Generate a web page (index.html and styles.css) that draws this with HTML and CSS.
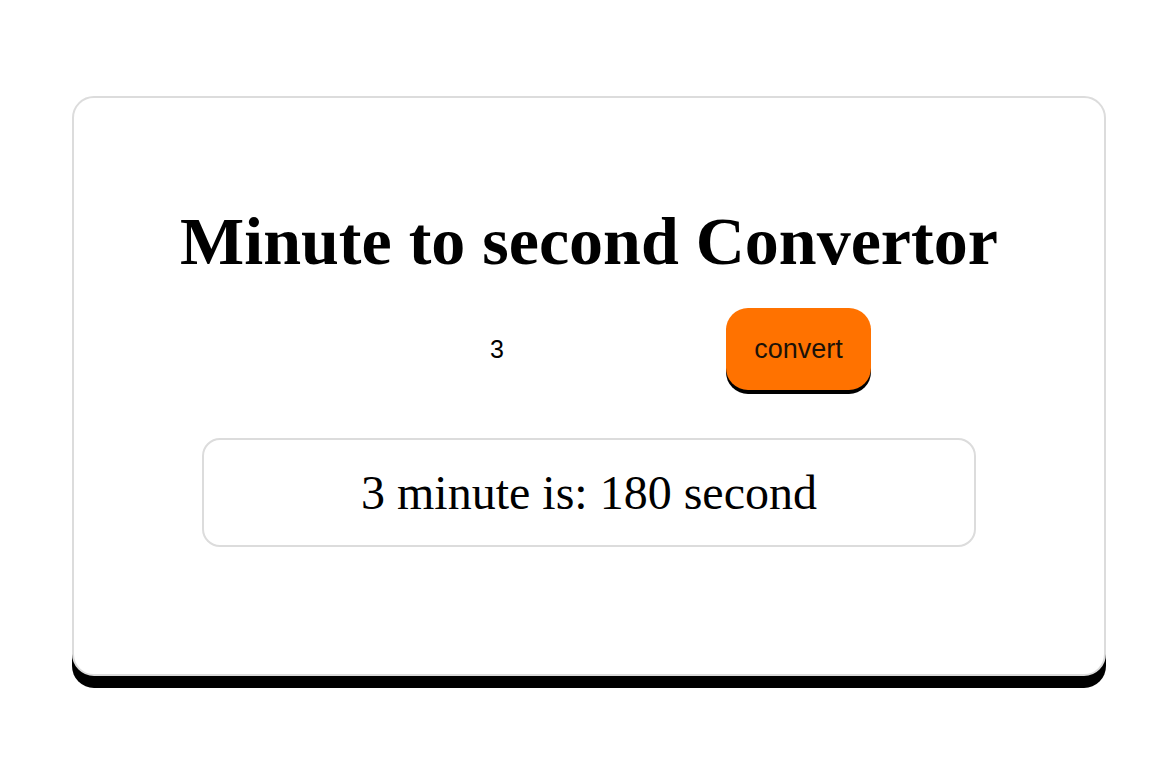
FILE: index.html
```html
<!DOCTYPE html>
<html>
<head>
<meta charset="utf-8">
<title>Minute to second Convertor</title>
<link rel="stylesheet" href="styles.css">
</head>
<body>
<div class="card">
  <h1 class="title">Minute to second Convertor</h1>
  <div class="row">
    <input class="minutes" type="text" value="3">
    <button class="convert">convert</button>
  </div>
  <div class="result">3 minute is: 180 second</div>
</div>
</body>
</html>
```
FILE: styles.css
```css
html, body {
  margin: 0;
  padding: 0;
  background: #ffffff;
}
body {
  box-sizing: border-box;
  min-height: 768px;
  padding: 96px 0 0 72px;
  font-family: "Liberation Serif", "Times New Roman", serif;
}
.card {
  box-sizing: border-box;
  width: 1034px;
  height: 580px;
  border: 2px solid #dcdcdc;
  border-radius: 22px;
  box-shadow: 0 12px 0 #000000;
  background: #ffffff;
  display: flex;
  flex-direction: column;
  align-items: center;
  padding-top: 104px;
}
.title {
  margin: 0;
  font-size: 68px;
  font-weight: bold;
  line-height: 78px;
  color: #000;
}
.row {
  margin-top: 28px;
  display: flex;
  align-items: center;
  gap: 39px;
}
.minutes {
  width: 380px;
  height: 82px;
  border: none;
  outline: none;
  padding: 0;
  background: transparent;
  text-align: center;
  font-family: "Liberation Sans", Arial, sans-serif;
  font-size: 25px;
  color: #000;
}
.convert {
  width: 145px;
  height: 82px;
  border: none;
  border-radius: 22px;
  background: #ff7200;
  box-shadow: 0 4px 0 #000;
  font-family: "Liberation Sans", Arial, sans-serif;
  font-size: 27px;
  color: #1c1208;
  padding: 0;
}
.result {
  box-sizing: border-box;
  margin-top: 48px;
  width: 774px;
  height: 109px;
  border: 2px solid #dcdcdc;
  border-radius: 18px;
  display: flex;
  align-items: center;
  justify-content: center;
  font-size: 48px;
  color: #000;
}
```
